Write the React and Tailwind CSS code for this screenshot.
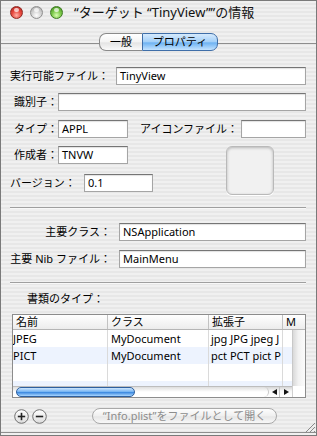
import React from "react";

const stripes =
  "bg-[repeating-linear-gradient(to_bottom,#f0f0f0_0px,#f0f0f0_2px,#e7e7e7_2px,#e7e7e7_4px)]";

function Light({ color }) {
  const fills = {
    red: "bg-[radial-gradient(circle_at_50%_75%,#ffb3a8_0%,#e8493f_45%,#b0221b_100%)] border-[#8e2a24]",
    gray: "bg-[radial-gradient(circle_at_50%_75%,#ffffff_0%,#d4d4d4_45%,#a5a5a5_100%)] border-[#8f8f8f]",
    green: "bg-[radial-gradient(circle_at_50%_75%,#d8ffb0_0%,#7cc84a_45%,#3f8a1c_100%)] border-[#3d7a22]",
  };
  return (
    <div className={`relative w-[13px] h-[13px] rounded-full border ${fills[color]}`}>
      <div className="absolute left-[3px] top-[1px] w-[5px] h-[4px] rounded-full bg-white/70" />
    </div>
  );
}

function Field({ className, value }) {
  return (
    <div
      className={`h-[18px] shrink-0 border border-[#a5a5a5] border-t-[#757575] bg-white shadow-[inset_0_1px_1px_rgba(0,0,0,0.12)] pl-[3px] leading-[16px] text-[11px] whitespace-nowrap overflow-hidden ${className}`}
    >
      {value}
    </div>
  );
}

function CircleButton({ minus }) {
  return (
    <svg width="15" height="15" viewBox="0 0 15 15">
      <defs>
        <linearGradient id={minus ? "gm" : "gp"} x1="0" y1="0" x2="0" y2="1">
          <stop offset="0" stopColor="#ffffff" />
          <stop offset="1" stopColor="#dcdcdc" />
        </linearGradient>
      </defs>
      <circle cx="7.5" cy="7.5" r="6.8" fill={`url(#${minus ? "gm" : "gp"})`} stroke="#707070" strokeWidth="1" />
      <rect x="3.8" y="6.7" width="7.4" height="1.6" fill="#222" />
      {!minus && <rect x="6.7" y="3.8" width="1.6" height="7.4" fill="#222" />}
    </svg>
  );
}

const rows = [
  { name: "JPEG", cls: "MyDocument", ext: "jpg JPG jpeg J" },
  { name: "PICT", cls: "MyDocument", ext: "pct PCT pict P" },
  { name: "", cls: "", ext: "" },
  { name: "", cls: "", ext: "" },
];

export default function App() {
  return (
    <div
      className={`relative w-[317px] h-[436px] overflow-hidden border border-[#7a7a7a] ${stripes} font-['Noto_Sans','Noto_Sans_CJK_JP',sans-serif] text-[11px] text-black flex flex-col`}
    >
      {/* title bar */}
      <div className="h-[21px] shrink-0 flex items-center">
        <div className="flex items-center gap-[7px] ml-[9px] mt-[1px]">
          <Light color="red" />
          <Light color="gray" />
          <Light color="green" />
        </div>
        <div className="ml-[11px] text-[13px] leading-[16px] text-[#111] whitespace-nowrap">
          “ターゲット “TinyView””の情報
        </div>
      </div>

      {/* tab box */}
      <div className="mt-[21px] flex-1 flex flex-col border-t border-b border-[#8e8e8e] mb-[2px]">
        <div className="self-center -mt-[11px] flex h-[18px] leading-[16px]">
          <div className="w-[43px] flex items-center justify-center rounded-l-[7px] border border-r-0 border-[#8a8a8a] bg-[linear-gradient(to_bottom,#ffffff_0%,#f3f3f3_50%,#e4e4e4_55%,#fafafa_100%)]">
            一般
          </div>
          <div className="w-[76px] flex items-center justify-center rounded-r-[7px] border border-[#3f6ea8] bg-[linear-gradient(to_bottom,#d6eafd_0%,#a2cff8_50%,#6db2f2_55%,#c4e3ff_100%)]">
            プロパティ
          </div>
        </div>

        {/* row 1 */}
        <div className="mt-[16px] flex items-center pl-[9px]">
          <span className="w-[106px] whitespace-nowrap">実行可能ファイル：</span>
          <Field className="w-[190px]" value="TinyView" />
        </div>

        {/* row 2 */}
        <div className="mt-[8px] flex items-center pl-[9px]">
          <span className="w-[48px] text-right whitespace-nowrap">識別子：</span>
          <Field className="w-[248px]" value="" />
        </div>

        {/* row 3 */}
        <div className="mt-[9px] flex items-center pl-[9px]">
          <span className="w-[48px] text-right whitespace-nowrap">タイプ：</span>
          <Field className="w-[70px]" value="APPL" />
          <span className="ml-[12px] w-[101px] whitespace-nowrap">アイコンファイル：</span>
          <Field className="w-[65px]" value="" />
        </div>

        {/* rows 4-5 with icon well */}
        <div className="mt-[8px] flex pl-[9px]">
          <div className="w-[216px] flex flex-col">
            <div className="flex items-center">
              <span className="w-[48px] text-right whitespace-nowrap">作成者：</span>
              <Field className="w-[70px]" value="TNVW" />
            </div>
            <div className="mt-[10px] flex items-center">
              <span className="w-[74px] whitespace-nowrap">バージョン：</span>
              <Field className="w-[69px]" value="0.1" />
            </div>
          </div>
          <div className="w-[48px] h-[49px] rounded-[6px] border border-[#b9b9b9] bg-[#f1f1f1] shadow-[inset_0_1px_3px_rgba(0,0,0,0.25),0_1px_0_#ffffff]" />
        </div>

        <div className="mt-[12px] ml-[9px] w-[296px] h-px bg-[#9f9f9f] shadow-[0_1px_0_#f8f8f8]" />

        {/* main class */}
        <div className="mt-[15px] flex items-center pl-[9px]">
          <span className="w-[109px] pr-[8px] text-right whitespace-nowrap">主要クラス：</span>
          <Field className="w-[187px]" value="NSApplication" />
        </div>
        <div className="mt-[9px] flex items-center pl-[9px]">
          <span className="w-[109px] pr-[8px] text-right whitespace-nowrap">主要 Nib ファイル：</span>
          <Field className="w-[187px]" value="MainMenu" />
        </div>

        <div className="mt-[14px] ml-[9px] w-[296px] h-px bg-[#9f9f9f] shadow-[0_1px_0_#f8f8f8]" />

        <div className="mt-[9px] ml-[26px] leading-[14px] whitespace-nowrap">書類のタイプ：</div>

        {/* table */}
        <div className="mt-[8px] ml-[11px] w-[294px] border border-[#8c8c8c] bg-white flex flex-col">
          <div className="h-[15px] flex border-b border-[#b5b5b5] bg-[linear-gradient(to_bottom,#ffffff,#ececec)] leading-[14px]">
            <div className="w-[95px] pl-[3px] border-r border-[#c2c2c2]">名前</div>
            <div className="w-[101px] pl-[3px] border-r border-[#c2c2c2]">クラス</div>
            <div className="w-[74px] pl-[3px] border-r border-[#c2c2c2]">拡張子</div>
            <div className="flex-1 pl-[3px]">M</div>
          </div>
          <div className="h-[56px] flex overflow-hidden">
            <div className="w-[279px] flex flex-col">
              {rows.map((r, i) => (
                <div
                  key={i}
                  className={`h-[17px] shrink-0 flex leading-[17px] whitespace-nowrap ${i % 2 === 1 ? "bg-[#edf3fe]" : "bg-white"}`}
                >
                  <div className="w-[95px] pl-[0px] border-r border-[#dadada] overflow-hidden">{r.name}</div>
                  <div className="w-[101px] pl-[3px] border-r border-[#dadada] overflow-hidden">{r.cls}</div>
                  <div className="w-[74px] pl-[2px] border-r border-[#dadada] overflow-hidden">{r.ext}</div>
                  <div className="flex-1" />
                </div>
              ))}
            </div>
            <div className="flex-1 bg-[linear-gradient(to_right,#d9d9d9,#f2f2f2_45%,#fbfbfb)] border-l border-[#c8c8c8]" />
          </div>
          <div className="h-[11px] flex">
            <div className="w-[279px] flex items-center bg-[linear-gradient(to_bottom,#d6d6d6,#f7f7f7_40%,#ffffff)] border-t border-[#bdbdbd]">
              <div className="relative w-[256px] h-full rounded-r-full border-r border-[#c9c9c9] bg-[linear-gradient(to_bottom,#dedede,#ffffff_50%)]">
                <div className="absolute left-[3px] top-0 w-[119px] h-[10px] rounded-full border border-[#2e5f9e] bg-[linear-gradient(to_bottom,#cfe6fd_0%,#78b6f3_45%,#3e8ae0_55%,#a9d6ff_100%)]" />
              </div>
              <div className="flex-1 flex h-full items-center">
                <div className="w-[11px] h-full flex items-center justify-center border-r border-[#c4c4c4]">
                  <svg width="5" height="6" viewBox="0 0 5 6">
                    <polygon points="0,3 5,0 5,6" fill="#111" />
                  </svg>
                </div>
                <div className="flex-1 h-full flex items-center justify-center">
                  <svg width="5" height="6" viewBox="0 0 5 6">
                    <polygon points="5,3 0,0 0,6" fill="#111" />
                  </svg>
                </div>
              </div>
            </div>
            <div className="flex-1 bg-white border-l border-[#d0d0d0]" />
          </div>
        </div>

        {/* bottom buttons */}
        <div className="mt-[10px] flex items-center pl-[13px]">
          <CircleButton />
          <div className="ml-[3px]">
            <CircleButton minus />
          </div>
          <div className="ml-[45px] w-[185px] h-[16px] rounded-full border border-[#a9a9a9] bg-[linear-gradient(to_bottom,#fdfdfd,#efefef_50%,#e6e6e6_55%,#f8f8f8)] flex items-center justify-center leading-[14px] text-[#8d8d8d] whitespace-nowrap">
            “Info.plist”をファイルとして開く
          </div>
        </div>
      </div>

      {/* resize grip */}
      <svg className="absolute right-[1px] bottom-[2px]" width="11" height="11" viewBox="0 0 11 11">
        <line x1="1" y1="11" x2="11" y2="1" stroke="#8a8a8a" strokeWidth="1" />
        <line x1="5" y1="11" x2="11" y2="5" stroke="#8a8a8a" strokeWidth="1" />
        <line x1="9" y1="11" x2="11" y2="9" stroke="#8a8a8a" strokeWidth="1" />
      </svg>
    </div>
  );
}
